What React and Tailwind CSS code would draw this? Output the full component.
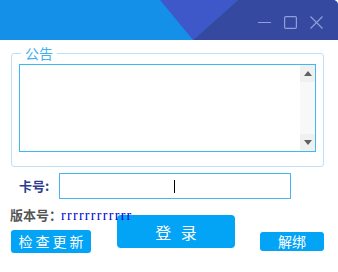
export default function App() {
  const cjk = { fontFamily: '"Noto Sans CJK SC", "Noto Sans", sans-serif' };

  return (
    <div className="h-[272px] w-[338px] overflow-hidden bg-white" style={cjk}>
      {/* Title bar */}
      <div className="relative h-[40px] overflow-hidden rounded-tr-[5px] bg-[#1590e8]">
        <svg className="absolute inset-0" width="338" height="40" viewBox="0 0 338 40">
          <polygon points="160,0 238,0 193,40" fill="#3e58c9" />
          <polygon points="238,0 338,0 338,40 193,40" fill="#3549a1" />
        </svg>
        <div className="relative flex h-full items-center justify-end gap-[13px] pr-[15px] pt-[4px]">
          <svg width="13" height="13" viewBox="0 0 13 13">
            <line x1="0" y1="6.5" x2="13" y2="6.5" stroke="#8f9fdb" strokeWidth="1.2" />
          </svg>
          <svg width="13" height="13" viewBox="0 0 13 13">
            <rect x="0.6" y="0.6" width="11.8" height="11.8" rx="1.2" fill="none" stroke="#8f9fdb" strokeWidth="1.2" />
          </svg>
          <svg width="13" height="13" viewBox="0 0 13 13">
            <path d="M0.5 0.5 L12.5 12.5 M12.5 0.5 L0.5 12.5" stroke="#8f9fdb" strokeWidth="1.2" />
          </svg>
        </div>
      </div>

      {/* Notice */}
      <fieldset className="mx-[11px] mt-[3px] w-[313px] rounded-[3px] border border-[#bfe0f7] px-[7px] pb-[14px]">
        <legend className="ml-[2px] px-[4px] text-[14px] leading-[20px] text-[#45b0ee]">公告</legend>
        <div className="mt-[1px] flex h-[88px] w-[297px] border border-[#3db8f5]">
          <div className="flex-1" />
          <div className="flex w-[15px] flex-col bg-[#f8f8f8]">
            <div className="flex h-[17px] items-center justify-center bg-[#f0f0f0]">
              <svg width="8" height="5" viewBox="0 0 8 5">
                <polygon points="4,0 8,5 0,5" fill="#606060" />
              </svg>
            </div>
            <div className="flex-1" />
            <div className="flex h-[17px] items-center justify-center bg-[#f0f0f0]">
              <svg width="8" height="5" viewBox="0 0 8 5">
                <polygon points="0,0 8,0 4,5" fill="#606060" />
              </svg>
            </div>
          </div>
        </div>
      </fieldset>

      {/* Card number */}
      <div className="mt-[6px] flex items-center pl-[19px]">
        <span className="w-[40px] text-[13px] font-bold text-[#2c3e94]">卡号:</span>
        <div className="flex h-[26px] w-[232px] items-center border border-[#46b6f2] pl-[114px]">
          <div className="h-[13px] w-px bg-black" />
        </div>
      </div>

      {/* Version */}
      <div className="relative z-10 mt-[8px] flex h-[16px] items-center pl-[10px] leading-[16px]">
        <span className="text-[13px] font-bold text-[#555555]">版本号：</span>
        <span
          className="ml-[-1px] mt-[2px] text-[14px] tracking-[1.3px] text-[#0000dd]"
          style={{ fontFamily: '"Liberation Serif", serif' }}
        >
          rrrrrrrrrrrr
        </span>
      </div>

      {/* Buttons */}
      <div className="-mt-[8px] flex items-start pl-[11px]">
        <button className="mt-[15px] h-[23px] w-[80px] rounded-[3px] bg-[#03a3f6] pl-[3px] text-[14px] leading-[23px] tracking-[3px] text-white">
          检查更新
        </button>
        <button className="ml-[26px] h-[33px] w-[118px] rounded-[4px] bg-[#03a3f6] pl-[3px] text-[16px] tracking-[3px] text-white">
          登 录
        </button>
        <button className="ml-[25px] mt-[17px] h-[19px] w-[64px] rounded-[3px] bg-[#03a3f6] text-[14px] leading-[19px] text-white">
          解绑
        </button>
      </div>
    </div>
  );
}
